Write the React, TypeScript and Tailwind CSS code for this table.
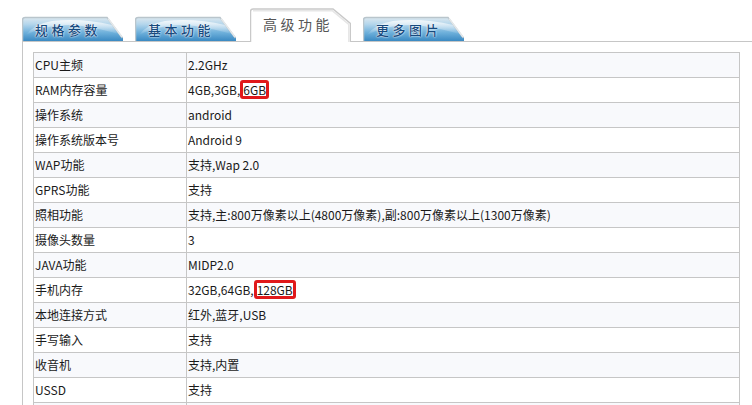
import React from "react";

const font = { fontFamily: '"Noto Sans CJK SC", "Noto Sans", sans-serif' };

function BlueTab({ label, className }: { label: string; className?: string }) {
  return (
    <div className={"relative h-[25px] w-[101px] " + (className || "")}>
      <svg className="absolute inset-0" width="101" height="25" viewBox="0 0 101 25">
        <defs>
          <linearGradient id="bt" x1="0" y1="0" x2="0" y2="1">
            <stop offset="0" stopColor="#dfe9ef" />
            <stop offset="0.3" stopColor="#b4d6ec" />
            <stop offset="0.65" stopColor="#6eb0db" />
            <stop offset="1" stopColor="#3a89c2" />
          </linearGradient>
          <linearGradient id="bw" x1="0" y1="0" x2="0" y2="1">
            <stop offset="0" stopColor="#ffffff" stopOpacity="0.75" />
            <stop offset="1" stopColor="#ffffff" stopOpacity="0" />
          </linearGradient>
        </defs>
        <path d="M0,25 V4 Q0,1 3,1 H85 L101,22 V25 Z" fill="url(#bt)" />
        <path d="M4,19 Q30,6 60,10 Q80,13 96,18 L90,9 Q60,2 30,5 Q12,8 4,19 Z" fill="url(#bw)" />
        <path d="M0.5,25 V4 Q0.5,1.5 3,1.5 H85 L100.5,22" fill="none" stroke="#b9c5cc" strokeWidth="1.5" />
        <path d="M86,2.5 L100,21" fill="none" stroke="#e4e8ea" strokeWidth="1.5" />
      </svg>
      <div
        className="absolute inset-0 flex items-center pl-[13px] pt-[2px] text-[13px] font-medium tracking-[3.5px] text-[#174a7e]"
        style={{ ...font, textShadow: "0 0 2px #ffffff, 0 0 1px #ffffff" }}
      >
        {label}
      </div>
    </div>
  );
}

function ActiveTab({ label, className }: { label: string; className?: string }) {
  return (
    <div className={"relative h-[33px] w-[101px] " + (className || "")}>
      <svg className="absolute inset-0" width="101" height="34" viewBox="0 0 101 34">
        <path d="M0,34 V3 Q0,0.5 3,0.5 H83 L101,15 V34 Z" fill="#ffffff" />
        <path d="M0.5,34 V3.5 Q0.5,1 3,1 H83 L100.5,15.5 V34" fill="none" stroke="#c9c9c9" strokeWidth="1.5" />
        <path d="M3,2.8 H82.5 L98.8,16.3 V34" fill="none" stroke="#e6e6e6" strokeWidth="1.5" />
      </svg>
      <div
        className="absolute inset-0 flex items-center pl-[13px] pb-[1px] text-[14px] tracking-[3.5px] text-[#555555]"
        style={font}
      >
        {label}
      </div>
    </div>
  );
}

function Mark({ children }: { children: React.ReactNode }) {
  return (
    <span className="relative ml-[3px] inline-block">
      {children}
      <span className="absolute -bottom-[3px] -left-[3px] -right-[3px] -top-[4px] rounded-[3px] border-[3px] border-solid border-[#e0191b]" />
    </span>
  );
}

const rows: [string, React.ReactNode][] = [
  ["CPU主频", "2.2GHz"],
  ["RAM内存容量", <>4GB,3GB,<Mark>6GB</Mark></>],
  ["操作系统", "android"],
  ["操作系统版本号", "Android 9"],
  ["WAP功能", "支持,Wap 2.0"],
  ["GPRS功能", "支持"],
  ["照相功能", "支持,主:800万像素以上(4800万像素),副:800万像素以上(1300万像素)"],
  ["摄像头数量", "3"],
  ["JAVA功能", "MIDP2.0"],
  ["手机内存", <>32GB,64GB,<Mark>128GB</Mark></>],
  ["本地连接方式", "红外,蓝牙,USB"],
  ["手写输入", "支持"],
  ["收音机", "支持,内置"],
  ["USSD", "支持"],
  ["", ""],
];

export default function App() {
  return (
    <div className="h-[405px] w-[752px] overflow-hidden bg-white text-[12px] text-[#1a1a1a]" style={font}>
      <div className="flex items-end pl-[22px] pt-[8px]">
        <BlueTab label="规格参数" />
        <BlueTab label="基本功能" className="ml-[12px]" />
        <ActiveTab label="高级功能" className="ml-[14px]" />
        <BlueTab label="更多图片" className="ml-[12px]" />
      </div>
      <div className="ml-[22px] border-l border-t border-[#c6c6c6] pl-[10px] pt-[10px]">
        <div className="w-[707px] border-l border-r border-t border-[#c6c6c6]">
          {rows.map(([k, v], i) => (
            <div
              key={i}
              className={
                "flex h-[25px] border-b border-[#c6c6c6] " + (i % 2 === 0 ? "bg-[#f8f9fc]" : "bg-white")
              }
            >
              <div className="flex w-[153px] items-center border-r border-[#c6c6c6] pl-[1px] leading-none">{k}</div>
              <div className="flex items-center pl-[1px] leading-none">
                <span>{v}</span>
              </div>
            </div>
          ))}
        </div>
      </div>
    </div>
  );
}
